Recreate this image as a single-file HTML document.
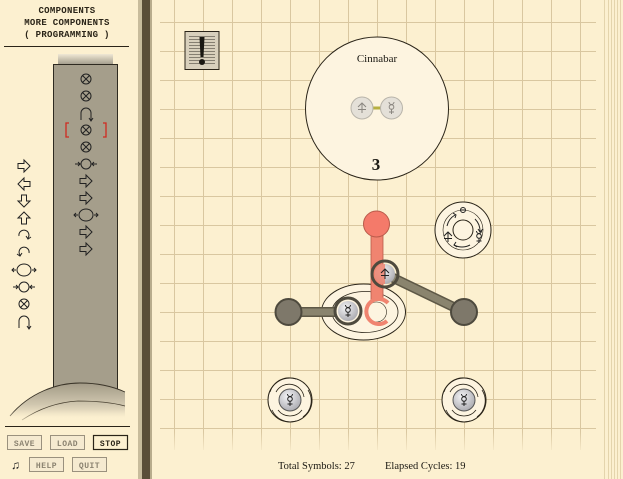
<!DOCTYPE html>
<html><head><meta charset="utf-8"><style>
html,body{margin:0;padding:0;width:623px;height:479px;overflow:hidden;background:#fcf0d0}
svg{display:block}
.px{font-family:"Liberation Mono",monospace;font-weight:bold;font-size:9px;fill:#2a2418;letter-spacing:0.3px}
.btn{font-family:"Liberation Mono",monospace;font-weight:bold;font-size:8px;letter-spacing:0.5px}
.sf{font-family:"Liberation Serif",serif}
</style></head><body>
<svg width="623" height="479" viewBox="0 0 623 479" xmlns="http://www.w3.org/2000/svg">
<defs>
<radialGradient id="atom" cx="0.4" cy="0.35" r="0.7"><stop offset="0" stop-color="#f4f4f6"/><stop offset="1" stop-color="#a8a8ae"/></radialGradient>
<linearGradient id="fadeB" x1="0" y1="0" x2="0" y2="1"><stop offset="0" stop-color="#fcf0d0" stop-opacity="0"/><stop offset="1" stop-color="#fcf0d0" stop-opacity="1"/></linearGradient>
<linearGradient id="base" x1="0" y1="0" x2="0" y2="1"><stop offset="0" stop-color="#a29a86"/><stop offset="0.6" stop-color="#cfc6ae"/><stop offset="1" stop-color="#fcf0d0"/></linearGradient>
<linearGradient id="cap" x1="0" y1="0" x2="0" y2="1"><stop offset="0" stop-color="#f0e8d4"/><stop offset="1" stop-color="#9e9888"/></linearGradient>
<g id="cross"><circle r="5" fill="none" stroke="#222" stroke-width="1"/><path d="M-3.5,-3.5L3.5,3.5M3.5,-3.5L-3.5,3.5" stroke="#222" stroke-width="1"/></g>
<g id="rarr"><path d="M-6,-2.5H0V-6L6,0L0,6V2.5H-6Z" fill="none" stroke="#222" stroke-width="1"/></g>
<g id="inn"><circle r="5" fill="none" stroke="#222"/><path d="M-11,0H-6M-8,-2L-6,0L-8,2M11,0H6M8,-2L6,0L8,2" fill="none" stroke="#222"/></g>
<g id="out"><ellipse rx="7" ry="6" fill="none" stroke="#222"/><path d="M-12,0H-8M-10,-2L-12,0L-10,2M12,0H8M10,-2L12,0L10,2" fill="none" stroke="#222"/></g>
<g id="sync"><path d="M-5,6V-1A5,5 0 0 1 5,-1V6M3,4L5,7L7,4" fill="none" stroke="#222"/></g>
<g id="tin"><path d="M-4,-1L0,-5L4,-1M0,-5V5M-4,1.5H4" fill="none" stroke-width="1"/></g>
<g id="merc"><circle cx="0" cy="-1" r="2.3" fill="none" stroke-width="1"/><path d="M-2.5,-6A2.5,2.5 0 0 0 2.5,-6M0,1.3V6M-2.5,4H2.5" fill="none" stroke-width="1"/></g>
</defs>
<!-- left panel -->
<rect x="0" y="0" width="140" height="479" fill="#fcf0d0"/>
<text class="px" x="67" y="13" text-anchor="middle">COMPONENTS</text>
<text class="px" x="67" y="25" text-anchor="middle">MORE COMPONENTS</text>
<text class="px" x="67" y="37" text-anchor="middle">( PROGRAMMING )</text>
<line x1="4" y1="46.5" x2="129" y2="46.5" stroke="#2a2418"/>
<rect x="58" y="54" width="55" height="11" fill="url(#cap)"/>
<rect x="53.5" y="64.5" width="64" height="330" fill="#a59e8b" stroke="#2e2a20"/>
<path d="M10,416 C30,392 58,383 80,383 C100,383 114,387 125,392 L125,418 L10,418Z" fill="url(#base)"/>
<path d="M10,416 C30,392 58,383 80,383 C100,383 114,387 125,392" fill="none" stroke="#3a3428" stroke-width="0.9"/>
<path d="M22,420 C40,408 60,402 78,401 C98,401 114,403 125,406" fill="none" stroke="#4a4232" stroke-width="0.8"/>
<rect x="0" y="410" width="140" height="14" fill="url(#fadeB)"/>
<line x1="5" y1="426.5" x2="130" y2="426.5" stroke="#2a2418"/>
<!-- column icons -->
<g transform="translate(86,0)">
<use href="#cross" y="79"/><use href="#cross" y="96"/><use href="#sync" y="114"/>
<use href="#cross" y="130"/><use href="#cross" y="147"/><use href="#inn" y="164"/>
<use href="#rarr" y="181"/><use href="#rarr" y="198"/><use href="#out" y="215"/>
<use href="#rarr" y="232"/><use href="#rarr" y="249"/>
</g>
<path d="M69,123H66V137H69M103,123H106V137H103" fill="none" stroke="#d02a20" stroke-width="1.3"/>
<g transform="translate(24,0)">
<use href="#rarr" y="166"/>
<use href="#rarr" transform="translate(0,184) rotate(180)"/>
<use href="#rarr" transform="translate(0,201) rotate(90)"/>
<use href="#rarr" transform="translate(0,218) rotate(-90)"/>
<path d="M-5,237A5,5 0 1 1 4,239M2,237L4,240L7,238" fill="none" stroke="#222" transform="translate(0,-1)"/>
<path d="M5,253A5,5 0 1 0 -4,255M-2,253L-4,256L-7,254" fill="none" stroke="#222"/>
<use href="#out" y="270"/><use href="#inn" y="287"/><use href="#cross" y="304"/><use href="#sync" y="322"/>
</g>
<!-- buttons -->
<g class="btn">
<rect x="7.5" y="435.5" width="34" height="14" fill="#f5ead0" stroke="#9a917e"/><text x="24.5" y="446" text-anchor="middle" fill="#8a8270">SAVE</text>
<rect x="50.5" y="435.5" width="34" height="14" fill="#f5ead0" stroke="#9a917e"/><text x="67.5" y="446" text-anchor="middle" fill="#8a8270">LOAD</text>
<rect x="93.5" y="435.5" width="34" height="14" fill="#fcf0d0" stroke="#2a2418" stroke-width="1.2"/><text x="110.5" y="446" text-anchor="middle" fill="#2a2418">STOP</text>
<rect x="29.5" y="457.5" width="34" height="14" fill="#f5ead0" stroke="#9a917e"/><text x="46.5" y="468" text-anchor="middle" fill="#8a8270">HELP</text>
<rect x="72.5" y="457.5" width="34" height="14" fill="#f5ead0" stroke="#9a917e"/><text x="89.5" y="468" text-anchor="middle" fill="#8a8270">QUIT</text>
</g>
<text x="11" y="469" font-size="12" fill="#222" class="sf">♫</text>
<!-- divider -->
<rect x="138" y="0" width="4" height="479" fill="#c8bc9c"/>
<rect x="142" y="0" width="8" height="479" fill="#5a4e38"/>
<rect x="150" y="0" width="2" height="479" fill="#b8ac8c"/>
<!-- grid -->
<g stroke="#d9c7a0" stroke-width="1">
<path d="M174.5,0V450M203.5,0V450M232.5,0V450M261.5,0V450M290.5,0V450M319.5,0V450M348.5,0V450M377.5,0V450M406.5,0V450M435.5,0V450M464.5,0V450M493.5,0V450M522.5,0V450M551.5,0V450M580.5,0V450"/>
<path d="M160,22.5H596M160,51.5H596M160,80.5H596M160,109.5H596M160,138.5H596M160,167.5H596M160,196.5H596M160,225.5H596M160,254.5H596M160,283.5H596M160,312.5H596M160,341.5H596M160,370.5H596M160,399.5H596M160,428.5H596"/>
</g>
<rect x="155" y="432" width="445" height="22" fill="url(#fadeB)"/>
<!-- right page edges -->
<g stroke="#e4d4ac"><path d="M604.5,0V479M608.5,0V479M611.5,0V479M614.5,0V479M617.5,0V479M620.5,0V479"/></g>
<!-- exclamation -->
<rect x="185" y="31.5" width="34" height="38" fill="#d8d0bc" stroke="#2a2418"/>
<g stroke="#6a6458" stroke-width="0.7"><path d="M189,36.5H215M189,39.5H215M189,42.5H215M189,45.5H215M189,48.5H215M189,51.5H215M189,54.5H215M189,57.5H215M189,60.5H215M189,63.5H215"/></g>
<path d="M199.5,37H204.5L203.5,57H200.5Z" fill="#1a1812"/><circle cx="202" cy="62" r="3" fill="#1a1812"/>
<!-- molecule -->
<circle cx="377" cy="108.5" r="71.5" fill="#fdf4e0" stroke="#2a2418"/>
<text x="377" y="62" text-anchor="middle" font-size="11" class="sf" fill="#1a1812">Cinnabar</text>
<line x1="372" y1="108" x2="382" y2="108" stroke="#b8b040" stroke-width="3"/>
<circle cx="362" cy="108" r="11" fill="#e4e0d8" stroke="#b8b4aa"/>
<circle cx="391.5" cy="108" r="11" fill="#e4e0d8" stroke="#b8b4aa"/>
<use href="#tin" x="362" y="108" stroke="#8a8680"/>
<use href="#merc" x="391.5" y="108" stroke="#8a8680"/>
<text x="376" y="170" text-anchor="middle" font-size="17" font-weight="bold" class="sf" fill="#1a1812">3</text>
<!-- rotation component -->
<circle cx="463" cy="230" r="28" fill="#fdf4e0" stroke="#2a2418"/>
<circle cx="463" cy="230" r="20" fill="none" stroke="#2a2418" stroke-width="0.6"/>
<circle cx="463" cy="230" r="10" fill="none" stroke="#2a2418"/>
<path d="M447,226A17,17 0 0 1 455,215M475,219A17,17 0 0 1 480,232M470,245A17,17 0 0 1 454,245" fill="none" stroke="#222"/>
<path d="M453,213L456,215L455,218M478,229L480,232L483,229M456,242L454,245L457,247" fill="none" stroke="#222"/>
<circle cx="463" cy="210" r="2.5" fill="none" stroke="#222"/><path d="M460.5,210H465.5" stroke="#222"/>
<use href="#tin" x="448" y="237" stroke="#222"/>
<use href="#merc" x="479" y="237" stroke="#222"/>
<!-- waldo area -->
<ellipse cx="363.5" cy="312" rx="42" ry="28" fill="#fdf4e0" stroke="#2a2418"/>
<ellipse cx="365" cy="312" rx="33" ry="20.5" fill="none" stroke="#2a2418" stroke-width="0.8"/>
<line x1="288" y1="312" x2="336" y2="312" stroke="#5e5846" stroke-width="10"/>
<line x1="288" y1="312" x2="336" y2="312" stroke="#8a846e" stroke-width="7"/>
<line x1="385" y1="274" x2="464" y2="312" stroke="#5e5846" stroke-width="10"/>
<line x1="385" y1="274" x2="464" y2="312" stroke="#8a846e" stroke-width="7"/>
<circle cx="288.5" cy="312" r="13" fill="#7e786a" stroke="#4e4a3e" stroke-width="2"/>
<circle cx="464" cy="312" r="13" fill="#7e786a" stroke="#4e4a3e" stroke-width="2"/>
<rect x="371" y="232" width="12" height="68" fill="#f08470" stroke="#b85a4a" stroke-width="0.8"/>
<circle cx="376.5" cy="224" r="13" fill="#f47a6a" stroke="#b85a4a"/>
<circle cx="376.5" cy="312" r="10" fill="#fdf4e0" stroke="#2a2418" stroke-width="0.6"/>
<path d="M387,321A12.5,12.5 0 1 1 388,303" fill="none" stroke="#f08470" stroke-width="4"/>
<circle cx="348" cy="311" r="13" fill="none" stroke="#4e4a3e" stroke-width="3"/>
<circle cx="348" cy="311" r="10" fill="url(#atom)"/>
<use href="#merc" x="348" y="311" stroke="#222"/>
<circle cx="385" cy="274" r="13" fill="none" stroke="#4e4a3e" stroke-width="3"/>
<circle cx="385" cy="274" r="10" fill="url(#atom)"/>
<path d="M385,264A10,10 0 0 0 385,284Z" fill="#f08470" opacity="0.85"/>
<use href="#tin" x="385" y="274" stroke="#222"/>
<!-- receptors -->
<g id="rec">
<circle cx="290" cy="400" r="22" fill="#fdf4e0" stroke="#2a2418"/>
<path d="M270,392A20,20 0 0 1 296,379M308,390A20,20 0 0 1 303,417M296,421A20,20 0 0 1 272,410M276,392A15,15 0 0 1 304,397M302,410A15,15 0 0 1 278,410" fill="none" stroke="#2a2418" stroke-width="0.8"/>
<circle cx="290" cy="400" r="11" fill="url(#atom)" stroke="#555"/>
<use href="#merc" x="290" y="400" stroke="#222"/>
</g>
<use href="#rec" x="174"/>
<!-- footer -->
<text x="278" y="469" font-size="10.5" class="sf" fill="#1a1812">Total Symbols: 27</text>
<text x="385" y="469" font-size="10.5" class="sf" fill="#1a1812">Elapsed Cycles: 19</text>
</svg>
</body></html>
